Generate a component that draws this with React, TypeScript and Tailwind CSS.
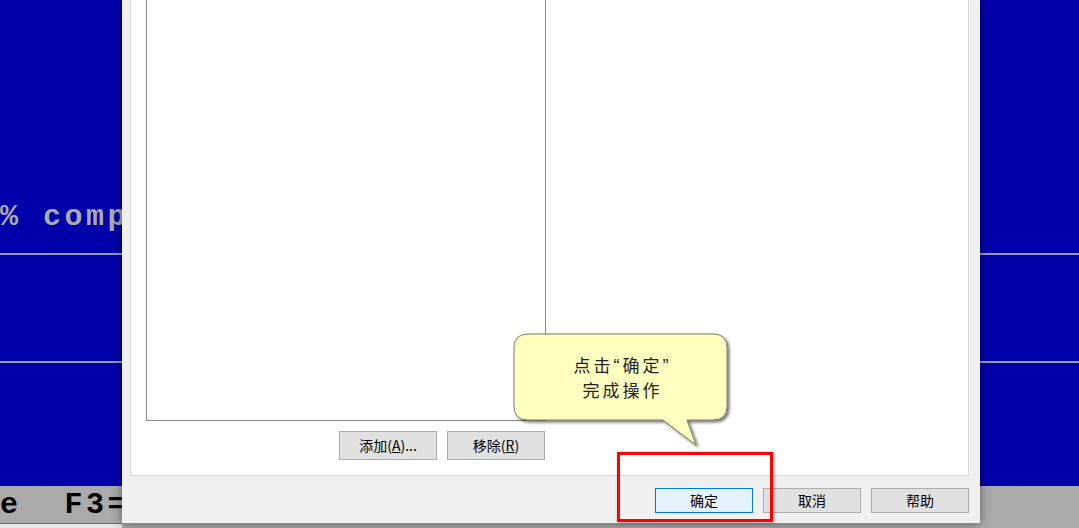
import React from "react";

const dosFont = { fontFamily: '"Liberation Mono", "DejaVu Sans Mono", monospace' };
const uiFont = { fontFamily: '"Noto Sans CJK SC", "Noto Sans", sans-serif' };
const quoteFont = { fontFamily: '"Liberation Sans", sans-serif' };

const Btn = ({ children, primary = false, tall = false }: { children: React.ReactNode; primary?: boolean; tall?: boolean }) => (
  <button
    className={
      "w-[98px] flex items-center justify-center border text-[14px] text-black " +
      (tall ? "h-[29px] " : "h-[25px] ") +
      (primary ? "bg-[#e5f1fb] border-[#0078d7]" : "bg-[#e1e1e1] border-[#adadad]")
    }
  >
    {children}
  </button>
);

const Callout = () => (
  <div className="absolute left-[500px] top-[320px] w-[240px] h-[130px]">
    <svg width="240" height="130" viewBox="0 0 240 130" className="absolute inset-0">
      <defs>
        <filter id="sh" x="-10%" y="-10%" width="130%" height="140%">
          <feDropShadow dx="2" dy="2" stdDeviation="1.6" floodColor="#000" floodOpacity="0.55" />
        </filter>
      </defs>
      <path
        d="M 28 14 H 213 Q 227 14 227 28 V 86 Q 227 100 213 100 H 187 L 196 125 L 163 100 H 28 Q 14 100 14 86 V 28 Q 14 14 28 14 Z"
        fill="#ffffc0"
        stroke="#7d7d6a"
        strokeWidth="1"
        filter="url(#sh)"
      />
    </svg>
    <div
      className="absolute left-[16px] top-[14px] w-[213px] h-[86px] flex flex-col items-center justify-center text-[17px] leading-[23px] tracking-[3px] text-[#222]"
      style={uiFont}
      lang="zh-CN"
    >
      <span>
        点击<span style={quoteFont} className="text-[18px]">“</span>确定<span style={quoteFont} className="text-[18px]">”</span>
      </span>
      <span>完成操作</span>
    </div>
  </div>
);

const Dialog = () => (
  <div
    className="absolute left-[122px] top-0 w-[858px] h-[524px] flex flex-col bg-[#f0f0f0] border-b border-[#8a8a8a] shadow-[0_0_10px_rgba(0,0,0,0.45)]"
    style={uiFont}
    lang="zh-CN"
  >
    {/* tab page */}
    <div className="flex-1 -mt-px ml-[8px] mr-[11px] bg-white border border-[#d9d9d9] flex flex-col pl-[15px] pb-[15px]">
      <div className="flex-1 w-[400px] border border-t-0 border-[#828790] bg-white" />
      <div className="w-[399px] mt-[10px] flex justify-end gap-[10px]">
        <Btn tall>
          添加(<span className="underline">A</span>)...
        </Btn>
        <Btn tall>
          移除(<span className="underline">R</span>)
        </Btn>
      </div>
    </div>
    {/* footer */}
    <div className="h-[47px] flex justify-end gap-[10px] pr-[11px] pt-[12px]">
      <Btn primary>确定</Btn>
      <Btn>取消</Btn>
      <Btn>帮助</Btn>
    </div>
  </div>
);

export default function App() {
  return (
    <div className="relative w-[1079px] h-[528px] overflow-hidden bg-[#0000aa]" style={dosFont}>
      {/* DOS screen behind */}
      <div className="flex flex-col h-full">
        <div className="h-[253px] pt-[201px]">
          <div className="text-[30px] leading-[32px] font-bold tracking-[3.5px] text-[#aaaaaa] whitespace-pre">% comp</div>
        </div>
        <div className="h-[2px] bg-[#9c9cb4]" />
        <div className="h-[106px]" />
        <div className="h-[2px] bg-[#9c9cb4]" />
        <div className="flex-1" />
        <div className="h-[37px] bg-[#aaaaaa] pt-[3px]">
          <div className="text-[30px] leading-[32px] font-bold tracking-[3.5px] text-black whitespace-pre">e  F3=</div>
        </div>
        <div className="h-[5px] flex">
          <div className="w-[122px] bg-[#e6e6e6] border-t border-[#6a6a6a]" />
          <div className="flex-1 bg-[#aaaaaa]" />
        </div>
      </div>

      <Dialog />

      {/* red highlight box */}
      <div className="absolute left-[617px] top-[452px] w-[156px] h-[70px] border-[3px] border-[#ff0000] shadow-[1px_1px_3px_rgba(0,0,0,0.35)]" />

      <Callout />
    </div>
  );
}
